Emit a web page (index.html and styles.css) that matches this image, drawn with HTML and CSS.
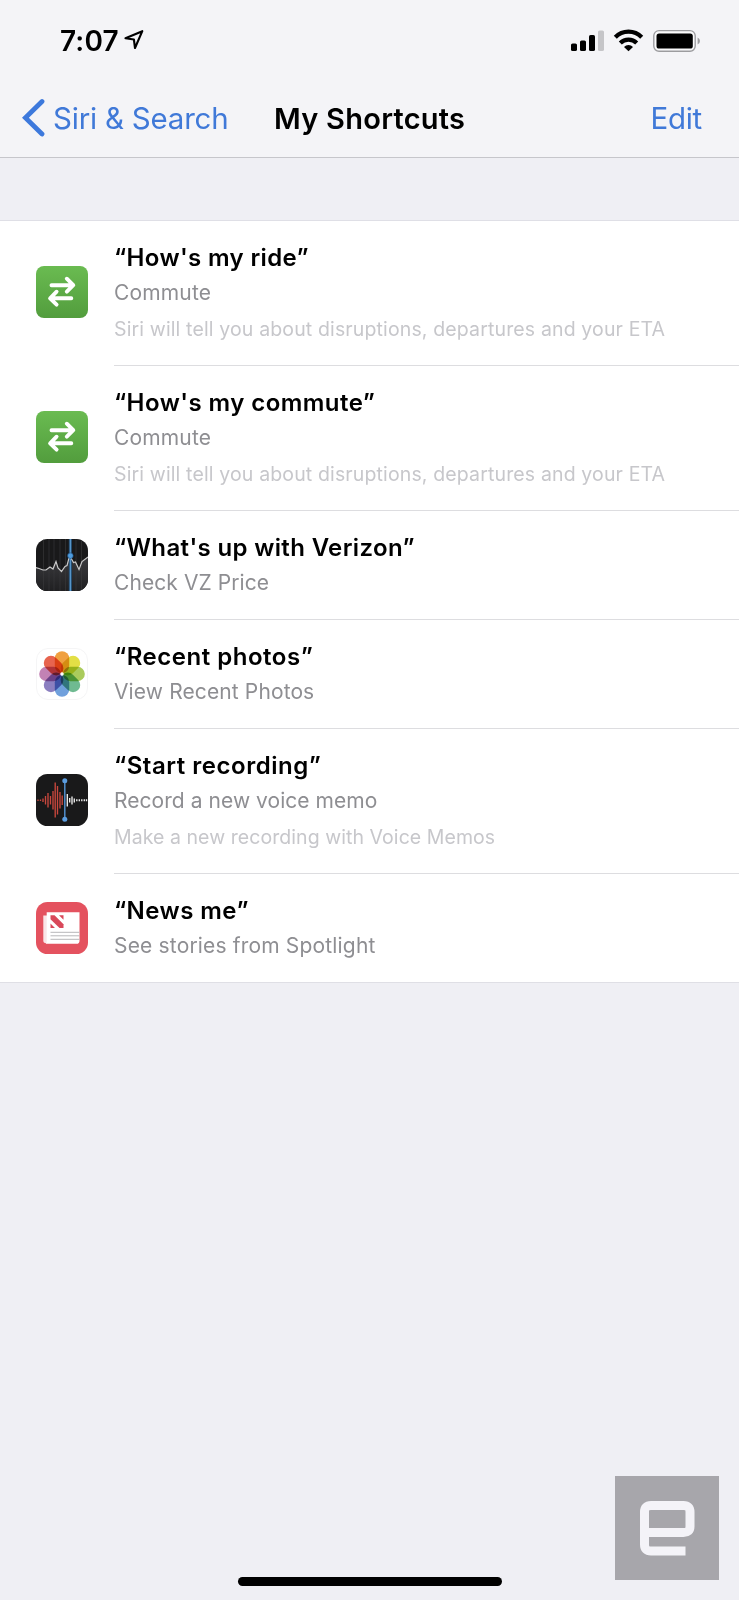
FILE: index.html
```html
<!DOCTYPE html>
<html lang="en">
<head>
<meta charset="utf-8">
<title>My Shortcuts</title>
<link rel="stylesheet" href="styles.css">
</head>
<body>
<div class="screen">
  <header class="top">
    <div class="status">
      <span class="time">7:07</span>
      <svg class="location" width="22" height="22" viewBox="0 0 22 22"><path d="M1.5 9.3 18.3 2.2 11 19 9.9 10.5Z" fill="none" stroke="#000" stroke-width="2.1" stroke-linejoin="round"/></svg>
      <svg class="indicators" width="132" height="26" viewBox="0 0 132 26">
        <rect x="1" y="15.5" width="6" height="7.5" rx="1.6"/>
        <rect x="10" y="12.5" width="6" height="10.5" rx="1.6"/>
        <rect x="19" y="7" width="6" height="16" rx="1.6"/>
        <rect x="28" y="2.5" width="6" height="20.5" rx="1.6" fill="#c5c5c8"/>
        <g fill="none" stroke="#000" stroke-width="4.2"><path d="M45.3 9.2a18.2 18.2 0 0 1 26.4 0"/><path d="M50.3 15a11.5 11.5 0 0 1 16.4 0"/></g>
        <path d="M54 19a6.3 6.3 0 0 1 9 0l-4.5 4.2Z"/>
        <rect x="83.8" y="2.6" width="41.4" height="20.6" rx="5.2" fill="#fbfbfc" stroke="#9c9c9f" stroke-width="1.4"/>
        <rect x="86.5" y="5.5" width="36.3" height="15" rx="2.6"/>
        <path d="M127.6 9.5q2.4 1 2.4 3.5t-2.4 3.5Z" fill="#9c9c9f"/>
      </svg>
    </div>
    <nav class="nav">
      <a class="back"><svg width="24" height="40" viewBox="0 0 24 40"><path d="M20 3.5 3.4 19.8 20 36" fill="none" stroke="#3d79dc" stroke-width="4.8" stroke-linecap="round"/></svg><span class="back-label">Siri &amp; Search</span></a>
      <h1 class="title">My Shortcuts</h1>
      <a class="edit">Edit</a>
    </nav>
  </header>

  <ul class="list">
    <li class="row tall">
      <svg class="icon" viewBox="0 0 52 52"><defs><linearGradient id="green" x1="0" y1="0" x2="0" y2="1"><stop offset="0" stop-color="#6abb51"/><stop offset="1" stop-color="#529d3d"/></linearGradient></defs><rect width="52" height="52" rx="8" fill="url(#green)"/><g id="arrows" fill="none" stroke="#fff" stroke-width="3.9" stroke-linecap="round" stroke-linejoin="round"><path d="M15.5 19.2H36M30.8 12.7 37.3 19.2 30.8 25.7"/><path d="M35.3 32.3H15M20.6 25.7 14.1 32.3 20.6 38.6"/></g></svg>
      <div class="text"><div class="phrase p1">“How's my ride”</div><div class="action a1">Commute</div><div class="detail d1">Siri will tell you about disruptions, departures and your ETA</div></div>
    </li>
    <li class="row tall">
      <svg class="icon" viewBox="0 0 52 52"><rect width="52" height="52" rx="8" fill="url(#green)"/><use href="#arrows"/></svg>
      <div class="text"><div class="phrase p2">“How's my commute”</div><div class="action a1">Commute</div><div class="detail d1">Siri will tell you about disruptions, departures and your ETA</div></div>
    </li>
    <li class="row">
      <svg class="icon" viewBox="0 0 52 52"><defs><clipPath id="tile"><rect width="52" height="52" rx="11.5"/></clipPath><linearGradient id="area" x1="0" y1="0" x2="0" y2="1"><stop offset="0" stop-color="#3b3b3e"/><stop offset="1" stop-color="#202022"/></linearGradient></defs>
        <g clip-path="url(#tile)"><rect width="52" height="52" fill="#19191a"/><path d="M0 28.5 3 29.5 7 31 10 31 14 28 17 30 20 22.5 22 29 25.5 32.5 29 27.5 31 26.5 34 17 37.5 23.5 39.5 23 43 30.5 46 22.5 52 18V52H0Z" fill="url(#area)"/><path d="M7.5 0V52M13 0V52M18 0V52M24 0V52M29.5 0V52M40 0V52M45.5 0V52" stroke="#3a3a3c" stroke-width=".6"/><path d="M34.4 0V52" stroke="#234b6d" stroke-width="3.2"/><path d="M0 28.5 3 29.5 7 31 10 31 14 28 17 30 20 22.5 22 29 25.5 32.5 29 27.5 31 26.5 33 19 35 19 37.5 23.5 39.5 23 43 30.5 46 22.5 52 18" fill="none" stroke="#c9c9c9" stroke-width="1.2"/><path d="M34.4 0V52" stroke="#5795c9" stroke-width="1.3"/><circle cx="34.4" cy="16.7" r="2.8" fill="#4f9de0" stroke="#1e4c78" stroke-width=".6"/></g></svg>
      <div class="text"><div class="phrase p3">“What's up with Verizon”</div><div class="action a3">Check VZ Price</div></div>
    </li>
    <li class="row">
      <svg class="icon" viewBox="0 0 52 52"><rect x=".5" y=".5" width="51" height="51" rx="11.5" fill="#fff" stroke="#f5f5f6"/>
        <g class="petals">
          <rect x="18.8" y="3.2" width="14.4" height="21.8" rx="7.2" fill="#f0a040"/>
          <rect x="18.8" y="3.2" width="14.4" height="21.8" rx="7.2" fill="#e3df45" transform="rotate(45 26 26)"/>
          <rect x="18.8" y="3.2" width="14.4" height="21.8" rx="7.2" fill="#aacb5c" transform="rotate(90 26 26)"/>
          <rect x="18.8" y="3.2" width="14.4" height="21.8" rx="7.2" fill="#6fba91" transform="rotate(135 26 26)"/>
          <rect x="18.8" y="3.2" width="14.4" height="21.8" rx="7.2" fill="#70a0dc" transform="rotate(180 26 26)"/>
          <rect x="18.8" y="3.2" width="14.4" height="21.8" rx="7.2" fill="#8b7fc0" transform="rotate(225 26 26)"/>
          <rect x="18.8" y="3.2" width="14.4" height="21.8" rx="7.2" fill="#c282b4" transform="rotate(270 26 26)"/>
          <rect x="18.8" y="3.2" width="14.4" height="21.8" rx="7.2" fill="#e7644e" transform="rotate(315 26 26)"/>
        </g><circle cx="26" cy="26" r="1.7" fill="#fff"/></svg>
      <div class="text"><div class="phrase p4">“Recent photos”</div><div class="action a4">View Recent Photos</div></div>
    </li>
    <li class="row tall">
      <svg class="icon" viewBox="0 0 52 52"><rect width="52" height="52" rx="11.5" fill="#19191a"/>
        <path d="M2 25.5V27M4.5 25.5V27M7 24.5V28M9.5 22V30.5M12 19V33.5M14.5 22V30.5M17 17V35.5M19.2 8.5V43.5M21.5 12V40.5M24 18V34.5M26.2 21.5V31" stroke="#c9473d" stroke-width="1.35"/>
        <path d="M31.3 20V32.5M33.7 24V28.5M36 22.5V30.5M38.3 24.5V28.5M40.8 25.2V27.3M43.3 25.2V27.3M45.8 25.2V27.3M48.3 25.2V27.3M50.5 25.2V27.3" stroke="#eee" stroke-width="1.35"/>
        <path d="M28.8 7V45" stroke="#5495d6" stroke-width="1.4"/><circle cx="28.8" cy="6.8" r="2.5" fill="#5b9de0"/><circle cx="28.8" cy="45.3" r="2.5" fill="#5b9de0"/></svg>
      <div class="text"><div class="phrase p5">“Start recording”</div><div class="action a5">Record a new voice memo</div><div class="detail d5">Make a new recording with Voice Memos</div></div>
    </li>
    <li class="row">
      <svg class="icon" viewBox="0 0 52 52"><rect width="52" height="52" rx="11.5" fill="#e4525f"/>
        <path d="M7.3 13.5H11V41.3H10Q7.3 41.3 7.3 38.5Z" fill="#f9e5e7"/><path d="M10.7 10.2H43.5V38.7Q43.5 41.8 40.5 41.8H9.8Q10.7 41 10.7 39Z" fill="#fff"/>
        <path d="M14.5 13.3H18.5L27.5 22.2V26H23.5L14.5 17.2Z" fill="#d9485a"/><path d="M14.5 21.5 19 26H14.5ZM23 13.3H27.5V17.7Z" fill="#d9485a"/>
        <path d="M14.5 30.3H43.5M14.5 33.8H43.5M14.5 37.3H43.5" stroke="#b7b7ba" stroke-width="1"/></svg>
      <div class="text"><div class="phrase p6">“News me”</div><div class="action a6">See stories from Spotlight</div></div>
    </li>
  </ul>

  <footer class="bottom">
    <div class="home"></div>
    <svg class="badge" width="104" height="104" viewBox="0 0 104 104"><rect width="104" height="104" fill="#a7a6ab"/><path d="M70.5 75H36Q29.5 75 29.5 68.5V36Q29.5 29.5 36 29.5H68.5Q75 29.5 75 36V50.5Q75 56.5 68.5 56.5H29.5" fill="none" stroke="#f4f3f8" stroke-width="9"/></svg>
  </footer>
</div>
</body>
</html>
```
FILE: styles.css
```css
* { box-sizing: border-box; }
body { margin: 0; background: #efeff4; font-family: Inter, "Liberation Sans", sans-serif; }
.screen { width: 739px; height: 1600px; display: flex; flex-direction: column; overflow: hidden; position: relative; }
.top { height: 158px; background: #f4f4f7; border-bottom: 1px solid #c6c6cb; }
.status { height: 78px; padding: 4px 37px 0 60px; display: flex; align-items: center; }
.time { font-size: 28px; font-weight: 600; width: 64px; white-space: nowrap; letter-spacing: .15px; }
.location { margin-top: -2px; }
.indicators { margin: -1px 0 0 auto; }
.nav { height: 79px; display: grid; grid-template-columns: 274px 1fr auto; align-items: center; padding-right: 37px; font-size: 29.5px; white-space: nowrap; }
.back { display: flex; align-items: center; padding-left: 22px; color: #4079d8; }
.back-label { margin-left: 7px; letter-spacing: -.22px; }
.title { margin: 1px 0 0; font-size: 29px; font-weight: 600; letter-spacing: .25px; }
.edit { color: #4079d8; letter-spacing: -.25px; }
.list { list-style: none; margin: 62px 0 0; padding: 0; background: #fff; border-top: 1px solid #dfdfe6; border-bottom: 1px solid #dfdfe5; }
.row { display: flex; align-items: center; padding-left: 36px; }
.icon { width: 52px; height: 52px; flex: none; margin: -1px 26px 0 0; }
.tall .icon { margin-top: -3px; }
.text { flex: 1; padding: 20px 0 18px; border-bottom: 1px solid #dddde0; white-space: nowrap; }
.tall .text { padding-bottom: 17px; }
.row:last-child .text { border-bottom: 0; }
.phrase { font-size: 24px; line-height: 34px; font-weight: 600; }
.action { font-size: 21px; line-height: 36px; color: #8e8e92; }
.detail { font-size: 19.5px; line-height: 37px; color: #c7c7cb; }
.p1 { letter-spacing: .37px; }
.p2 { letter-spacing: .45px; }
.p3 { letter-spacing: .36px; }
.p4 { letter-spacing: .52px; }
.p5 { letter-spacing: .52px; }
.p6 { letter-spacing: .45px; }
.a1 { letter-spacing: .15px; }
.a3 { letter-spacing: .08px; }
.a4 { letter-spacing: .12px; }
.a5 { letter-spacing: .05px; }
.a6 { letter-spacing: .17px; }
.d1 { letter-spacing: .14px; }
.d5 { letter-spacing: .06px; }
.petals rect { mix-blend-mode: multiply; }
.bottom { flex: 1; position: relative; display: flex; justify-content: center; align-items: flex-end; padding-bottom: 14px; }
.home { width: 264px; height: 9px; border-radius: 5px; background: #000; }
.badge { position: absolute; right: 20px; bottom: 20px; }
```
